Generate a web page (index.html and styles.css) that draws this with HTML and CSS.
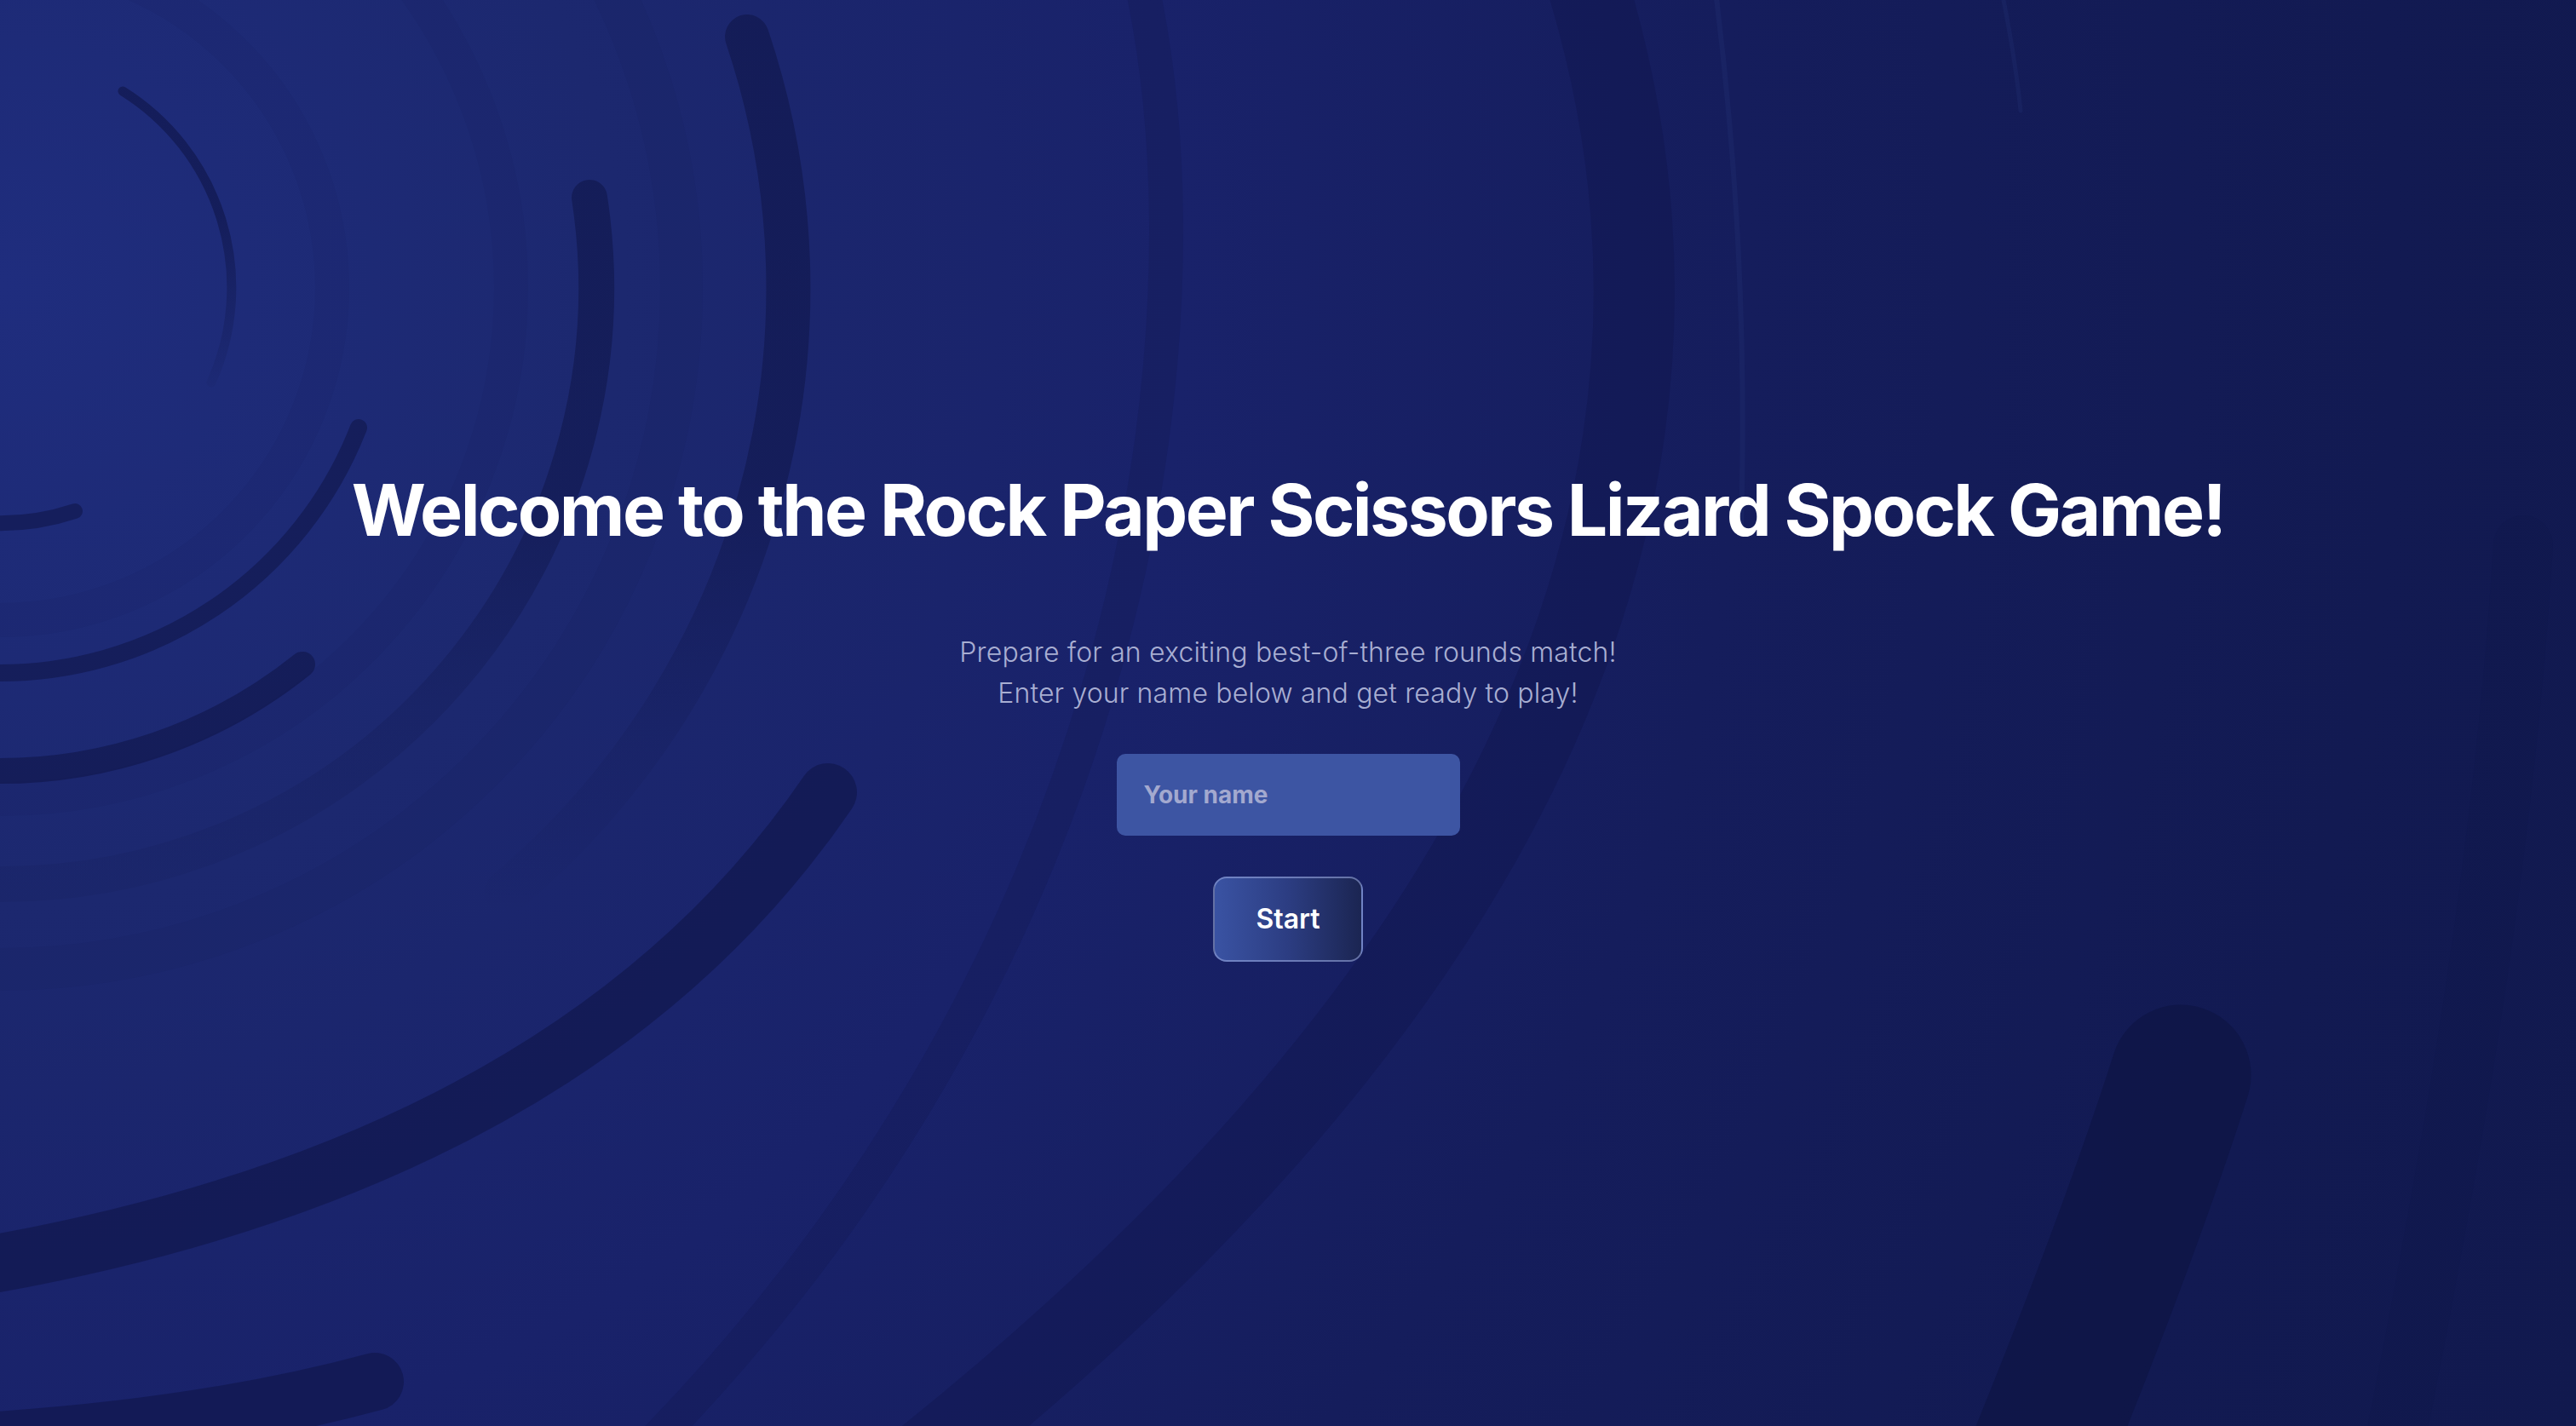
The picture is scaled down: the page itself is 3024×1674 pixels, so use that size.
FILE: index.html
```html
<!DOCTYPE html>
<html lang="en">
<head>
<meta charset="utf-8">
<title>Rock Paper Scissors Lizard Spock</title>
<link rel="stylesheet" href="styles.css">
</head>
<body>
<svg class="bg-art" viewBox="0 0 3024 1674" preserveAspectRatio="none" aria-hidden="true">
  <defs>
    <linearGradient id="fadeThin" gradientUnits="userSpaceOnUse" x1="0" y1="250" x2="0" y2="460">
      <stop offset="0" stop-color="#0e1446" stop-opacity="0.6"/>
      <stop offset="1" stop-color="#0e1446" stop-opacity="0.05"/>
    </linearGradient>
    <linearGradient id="fadeMid" gradientUnits="userSpaceOnUse" x1="0" y1="200" x2="0" y2="1040">
      <stop offset="0" stop-color="#0e1446" stop-opacity="0.55"/>
      <stop offset="0.45" stop-color="#0e1446" stop-opacity="0.5"/>
      <stop offset="0.75" stop-color="#0e1446" stop-opacity="0.2"/>
      <stop offset="1" stop-color="#0e1446" stop-opacity="0.1"/>
    </linearGradient>
    <linearGradient id="fadeBig" gradientUnits="userSpaceOnUse" x1="0" y1="40" x2="0" y2="1080">
      <stop offset="0" stop-color="#0e1446" stop-opacity="0.55"/>
      <stop offset="0.5" stop-color="#0e1446" stop-opacity="0.5"/>
      <stop offset="0.78" stop-color="#0e1446" stop-opacity="0.15"/>
      <stop offset="1" stop-color="#0e1446" stop-opacity="0"/>
    </linearGradient>
  </defs>
  <g class="rings" fill="none">
    <circle cx="0" cy="338" r="390" stroke-width="40"/>
    <circle cx="0" cy="338" r="600" stroke-width="40"/>
    <circle cx="0" cy="338" r="800" stroke-width="50"/>
  </g>
  <g class="arcs" fill="none" stroke-linecap="round">
    <path class="fade-thin" d="M144,107 A272,272 0 0 1 248,449" stroke-width="11"/>
    <path d="M88,600 A276,276 0 0 1 -10,614" stroke-width="18"/>
    <path d="M421,502 A452,452 0 0 1 -10,790" stroke-width="20"/>
    <path d="M355,780 A567,567 0 0 1 -10,905" stroke-width="30"/>
    <path class="fade-mid" d="M692,232 A700,700 0 0 1 -10,1038" stroke-width="42"/>
    <path class="fade-big" d="M877,43 A925,925 0 0 1 595,1047" stroke-width="52"/>
    <path d="M972,930 Q676,1364 -20,1486" stroke-width="68"/>
    <path d="M440,1622 Q240,1676 -20,1692" stroke-width="68"/>
    <path class="faint" d="M1340,-20 C1430,400 1330,1120 760,1700" stroke-width="40"/>
    <path class="soft" d="M1860,-30 C2010,450 1910,1050 1090,1710" stroke-width="95"/>
    <path class="deep" d="M2560,1262 Q2500,1450 2390,1720" stroke-width="165"/>
    <path class="fainter" d="M2962,640 C2940,1000 2880,1350 2810,1700" stroke-width="70"/>
    <path class="glint" d="M2014,-10 C2040,200 2050,400 2044,620" stroke-width="6"/>
    <path class="glint" d="M2350,-10 C2360,40 2368,90 2372,130" stroke-width="5"/>
  </g>
</svg>
<main class="welcome">
  <h1 class="title">Welcome to the Rock Paper Scissors Lizard Spock Game!</h1>
  <p class="lead">Prepare for an exciting best-of-three rounds match!<br>Enter your name below and get ready to play!</p>
  <form class="name-form">
    <input class="name-input" type="text" placeholder="Your name">
    <button class="start-btn" type="button">Start</button>
  </form>
</main>
</body>
</html>
```
FILE: styles.css
```css
html, body {
  margin: 0;
  height: 100%;
}

body {
  position: relative;
  overflow: hidden;
  font-family: Inter, "Noto Sans", "Liberation Sans", sans-serif;
  color: #ffffff;
  background:
    radial-gradient(circle at 0% 20%, #1f2d7e 0%, #1c286f 22%, #19226a 42%, #151d5c 62%, #121a52 85%, #11194e 100%);
}

.bg-art {
  position: absolute;
  inset: 0;
  width: 100%;
  height: 100%;
}

.rings circle {
  stroke: rgba(10, 16, 60, 0.05);
}

.arcs path {
  stroke: rgba(14, 20, 70, 0.55);
}

.arcs path.fade-thin {
  stroke: url(#fadeThin);
}

.arcs path.fade-mid {
  stroke: url(#fadeMid);
}

.arcs path.fade-big {
  stroke: url(#fadeBig);
}

.arcs path.faint {
  stroke: rgba(14, 20, 70, 0.2);
}

.arcs path.fainter {
  stroke: rgba(14, 20, 70, 0.1);
}

.arcs path.soft {
  stroke: rgba(14, 20, 70, 0.32);
}

.arcs path.deep {
  stroke: rgba(12, 18, 62, 0.5);
}

.arcs path.glint {
  stroke: rgba(60, 80, 160, 0.12);
}

.welcome {
  position: relative;
  min-height: 100vh;
  display: flex;
  flex-direction: column;
  align-items: center;
  justify-content: center;
  text-align: center;
}

.title {
  margin: 0 0 90px;
  font-size: 84px;
  line-height: 106px;
  font-weight: 700;
  letter-spacing: -2.5px;
  color: #ffffff;
}

.lead {
  margin: 0 0 47px;
  font-size: 32px;
  line-height: 48px;
  font-weight: 300;
  letter-spacing: 0.15px;
  color: #a8aed2;
}

.name-form {
  display: flex;
  flex-direction: column;
  align-items: center;
  gap: 48px;
}

.name-input {
  box-sizing: border-box;
  width: 403px;
  height: 96px;
  padding: 0 32px;
  border: none;
  border-radius: 10px;
  background: #3d55a3;
  font-family: inherit;
  font-size: 28px;
  font-weight: 700;
  color: #ffffff;
  outline: none;
}

.name-input::placeholder {
  color: #a3a9cf;
}

.start-btn {
  padding: 24px 48px;
  border: 2px solid rgba(150, 165, 220, 0.6);
  border-radius: 16px;
  background: linear-gradient(90deg, #3a53a3 0%, #2c3d82 50%, #1b2552 100%);
  font-family: inherit;
  font-size: 32px;
  line-height: 48px;
  font-weight: 600;
  color: #ffffff;
  cursor: pointer;
}
```
